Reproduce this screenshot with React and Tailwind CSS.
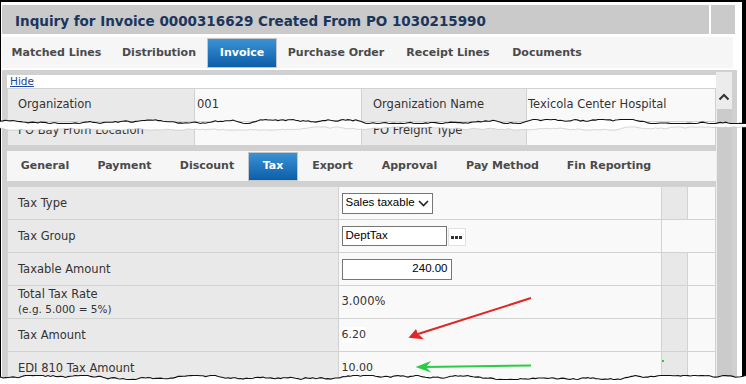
import React from "react";

const TABS1 = [
  ["Matched Lines", "w-[109px]"],
  ["Distribution", "w-[96px]"],
  ["Invoice", "w-[70px]", true],
  ["Purchase Order", "w-[118px]"],
  ["Receipt Lines", "w-[106px]"],
  ["Documents", "w-[92px]"],
];

const TABS2 = [
  ["General", "w-[76px]"],
  ["Payment", "w-[83px]"],
  ["Discount", "w-[82px]"],
  ["Tax", "w-[50px]", true],
  ["Export", "w-[69px]"],
  ["Approval", "w-[85px]"],
  ["Pay Method", "w-[101px]"],
  ["Fin Reporting", "w-[112px]"],
];

// jagged line for the torn-paper edges
function jagged(seed, y, amp) {
  let s = seed;
  const r = () => {
    s = (s * 16807) % 2147483647;
    return s / 2147483647;
  };
  const pts = [];
  let cur = 0;
  for (let x = -2; x <= 750; x += 2.5) {
    cur += (r() - 0.5) * amp;
    cur = Math.max(-amp, Math.min(amp, cur));
    pts.push([x, y + cur]);
  }
  return pts;
}
const str = (pts) => pts.map((p) => `${p[0].toFixed(1)},${p[1].toFixed(1)}`).join(" ");

function Tab({ label, w, active }) {
  if (active) {
    return (
      <div className={`${w} h-full flex items-center justify-center border border-[#c3c7cb] bg-linear-to-b from-[#3a93d4] to-[#0a5ea8] text-white`}>
        {label}
      </div>
    );
  }
  return <div className={`${w} h-full flex items-center justify-center text-[#4a4a4a]`}>{label}</div>;
}

function Row({ label, sub, children, merged }) {
  return (
    <div className="flex h-[33px] border-t border-[#d2d2d2]">
      <div className="w-[332px] bg-[#e9e9e9] border-l border-r border-[#d2d2d2] pl-[10px] flex flex-col justify-center text-[11.5px] text-[#333]">
        <span className="leading-[15px]">{label}</span>
        {sub && <span className="leading-[15px] text-[10.5px]">{sub}</span>}
      </div>
      <div className="w-[324px] bg-[#f9f9f9] border-r border-[#d2d2d2] pl-[3px] flex items-center">{children}</div>
      {merged ? (
        <div className="w-[54px] bg-[#f9f9f9] border-r border-[#d2d2d2]" />
      ) : (
        <>
          <div className="w-[26px] bg-[#e8e8e8] border-r border-[#d2d2d2]" />
          <div className="w-[28px] bg-[#f9f9f9] border-r border-[#d2d2d2]" />
        </>
      )}
    </div>
  );
}

export default function App() {
  const topA = jagged(7, 5.5, 2);
  const topB = jagged(13, 12.5, 1.6);
  const bot = jagged(29, 5.5, 2);

  return (
    <div className="relative w-[746px] h-[384px] overflow-hidden bg-white font-['DejaVu_Sans',Verdana,sans-serif]">
      <div className="h-full border-t-2 border-l border-r-4 border-black pl-px pt-[3px] pr-[5px]">
        {/* title bar */}
        <div className="flex gap-[2px] h-[29px]">
          <div className="w-[707px] bg-[#c9cac9] flex items-center pl-[13px] pt-[3px] text-[13.5px] font-bold text-[#1b365d]">
            Inquiry for Invoice 0000316629 Created From PO 1030215990
          </div>
          <div className="w-[24px] bg-[#c9cac9]" />
        </div>

        {/* main tabs */}
        <div className="mt-[3px] h-[31px] w-[731px] bg-[#f6f6f6] flex items-end text-[11px] font-bold">
          <div className="flex h-[30px]">
            {TABS1.map(([l, w, a]) => (
              <Tab key={l} label={l} w={w} active={a} />
            ))}
          </div>
        </div>

        {/* body */}
        <div className="mt-[2px] h-[314px] bg-[#d0d0d0] flex">
          <div className="w-[714px] pl-[5px] pt-[5px]">
            <div className="h-[13px] bg-white pl-[3px] text-[10.5px] leading-[12px] text-[#1a48a0] underline">Hide</div>
            <div className="flex h-[33px] border-t border-[#d2d2d2] text-[11.5px] text-[#333]">
              <div className="w-[188px] bg-[#e9e9e9] border-l border-r border-[#d2d2d2] pl-[10px] flex items-center">Organization</div>
              <div className="w-[167px] bg-[#f9f9f9] border-r border-[#d2d2d2] pl-[2px] flex items-center">001</div>
              <div className="w-[165px] bg-[#e9e9e9] border-r border-[#d2d2d2] pl-[11px] flex items-center">Organization Name</div>
              <div className="w-[189px] bg-[#f9f9f9] border-r border-[#d2d2d2] pl-[1px] flex items-center">Texicola Center Hospital</div>
            </div>
            <div className="flex h-[25px] border-t border-b border-[#d2d2d2] text-[11.5px] text-[#333] leading-[12px]">
              <div className="w-[188px] bg-[#e9e9e9] border-l border-r border-[#d2d2d2] pl-[10px] pt-[2px]">PO Bay From Location</div>
              <div className="w-[167px] bg-[#f9f9f9] border-r border-[#d2d2d2]" />
              <div className="w-[165px] bg-[#e9e9e9] border-r border-[#d2d2d2] pl-[11px] pt-[2px]">PO Freight Type</div>
              <div className="w-[189px] bg-[#f9f9f9] border-r border-[#d2d2d2]" />
            </div>

            {/* sub tabs */}
            <div className="mt-[5px] h-[30px] w-[709px] bg-[#f6f6f6] flex items-end text-[11px] font-bold">
              <div className="flex h-[29px]">
                {TABS2.map(([l, w, a]) => (
                  <Tab key={l} label={l} w={w} active={a} />
                ))}
              </div>
            </div>

            <div className="mt-[5px] w-[709px]">
              <Row label="Tax Type">
                <div className="w-[91px] h-[21px] border border-[#767676] bg-white flex items-center justify-between pl-[3px] pr-[3px] font-['Liberation_Sans',Arial,sans-serif] text-[11.5px] text-black">
                  <span>Sales taxable</span>
                  <svg width="11" height="7" viewBox="0 0 11 7">
                    <path d="M1 1 L5.5 5.5 L10 1" fill="none" stroke="#222" strokeWidth="1.6" />
                  </svg>
                </div>
              </Row>
              <Row label="Tax Group" merged>
                <div className="flex items-center gap-px">
                  <div className="w-[105px] h-[20px] border border-[#767676] bg-white flex items-center pl-[3px] font-['Liberation_Sans',Arial,sans-serif] text-[11.5px] text-black">
                    DeptTax
                  </div>
                  <div className="w-[18px] h-[18px] mt-[2px] border border-[#e2e2e2] bg-white flex items-center justify-center gap-px">
                    <div className="w-[3px] h-[3px] bg-[#333]" />
                    <div className="w-[3px] h-[3px] bg-[#333]" />
                    <div className="w-[3px] h-[3px] bg-[#333]" />
                  </div>
                </div>
              </Row>
              <Row label="Taxable Amount">
                <div className="w-[110px] h-[21px] border border-[#767676] bg-white flex items-center justify-end pr-[3px] font-['Liberation_Sans',Arial,sans-serif] text-[11.5px] text-black">
                  240.00
                </div>
              </Row>
              <Row label="Total Tax Rate" sub="(e.g. 5.000 = 5%)">
                <span className="text-[11.5px] text-[#333]">3.000%</span>
              </Row>
              <Row label="Tax Amount">
                <span className="text-[11px] text-[#333] bg-white">6.20</span>
              </Row>
              <Row label="EDI 810 Tax Amount">
                <span className="text-[11px] text-[#333]">10.00</span>
              </Row>
            </div>
          </div>

          {/* scrollbar */}
          <div className="w-[16px] mt-[2px] bg-[#ececec] flex flex-col items-center">
            <svg width="12" height="8" viewBox="0 0 12 8" className="mt-[21px]">
              <path d="M1.5 6.5 L6 2 L10.5 6.5" fill="none" stroke="#333" strokeWidth="2" />
            </svg>
            <div className="mt-[8px] w-[15px] flex-1 bg-[#cbcbcb]" />
          </div>
        </div>
      </div>

      {/* torn edge in the middle */}
      <svg className="absolute left-0 top-[116px]" width="746" height="18" viewBox="0 0 746 18">
        <polygon points={str([...topA, ...[...topB].reverse()])} fill="#fff" />
        <polyline points={str(topA)} fill="none" stroke="#111" strokeWidth="1.1" />
        <polyline points={str(topB)} fill="none" stroke="#c4c4c4" strokeWidth="0.7" />
      </svg>

      {/* torn edge at the bottom */}
      <svg className="absolute left-0 top-[372px]" width="746" height="12" viewBox="0 0 746 12">
        <polygon points={str([...bot, [750, 13], [-2, 13]])} fill="#fff" />
        <polyline points={str(bot)} fill="none" stroke="#111" strokeWidth="1.1" />
      </svg>

      {/* callout arrows */}
      <svg className="absolute left-0 top-0 pointer-events-none" width="746" height="384" viewBox="0 0 746 384">
        <line x1="531" y1="298" x2="418" y2="334" stroke="#e02626" strokeWidth="2" />
        <polygon points="408.5,337.8 416,329 418,334 424,339.2" fill="#e02626" />
        <line x1="531" y1="365.5" x2="425" y2="367" stroke="#2ccc44" strokeWidth="2" />
        <polygon points="415.5,367 431,361 426,367 431,372.5" fill="#2ccc44" />
        <rect x="662" y="360" width="2" height="2" fill="#2ccc44" />
      </svg>
    </div>
  );
}
